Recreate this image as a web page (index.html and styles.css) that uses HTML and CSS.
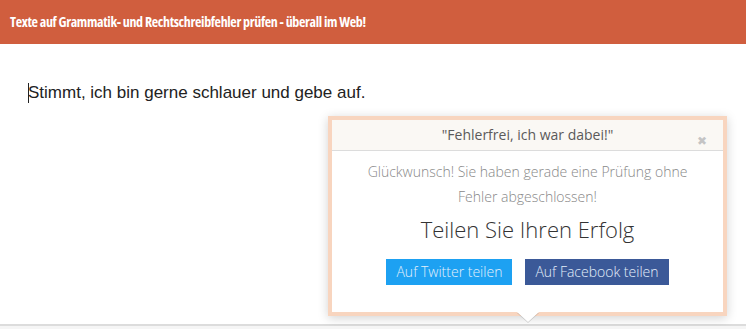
FILE: index.html
```html
<!DOCTYPE html>
<html lang="de">
<head>
    <meta charset="UTF-8">
    <title>Texte prüfen</title>
    <link rel="stylesheet" href="styles.css">
</head>
<body>
    <div class="topbar">Texte auf Grammatik- und Rechtschreibfehler prüfen - überall im Web!</div>

    <div class="editor">
        <p class="editor-text"><span class="caret"></span>Stimmt, ich bin gerne schlauer und gebe auf.</p>

        <div class="popup">
            <div class="popup-head">
                "Fehlerfrei, ich war dabei!"
                <span class="popup-close">&#10006;</span>
            </div>
            <div class="popup-body">
                <p class="popup-msg">Glückwunsch! Sie haben gerade eine Prüfung ohne<br>Fehler abgeschlossen!</p>
                <h2 class="popup-title">Teilen Sie Ihren Erfolg</h2>
                <div class="share">
                    <a class="btn btn-twitter">Auf Twitter teilen</a>
                    <a class="btn btn-facebook">Auf Facebook teilen</a>
                </div>
            </div>
            <div class="popup-arrow"></div>
        </div>
    </div>
</body>
</html>
```

FILE: styles.css
```css
body {
    margin: 0;
    font-family: "Open Sans", sans-serif;
    background: #f5f5f5;
}
.topbar {
    background: #d05e3e;
    color: #fff;
    height: 44px;
    line-height: 44px;
    padding: 0 10px;
    font-size: 14px;
    font-weight: 700;
    font-stretch: condensed;
    letter-spacing: -0.35px;
}
.editor {
    position: relative;
    background: #fff;
    height: 280px;
    border-bottom: 2px solid #dcdcdc;
}
.editor-text {
    margin: 0;
    padding: 39px 0 0 28px;
    font-family: "Liberation Sans", Arial, sans-serif;
    font-size: 17px;
    line-height: 20px;
    color: #222;
}
.caret {
    display: inline-block;
    width: 1px;
    height: 20px;
    background: #222;
    vertical-align: top;
    margin-right: -1px;
}
.popup {
    position: absolute;
    left: 328px;
    top: 72px;
    width: 391px;
    height: 192px;
    border: 4px solid #f8d5bf;
    background: #fff;
    box-shadow: 0 2px 10px rgba(0, 0, 0, 0.18);
}
.popup-head {
    position: relative;
    background: #faf8f4;
    border-bottom: 1px solid #dcdcdc;
    height: 30px;
    line-height: 30px;
    text-align: center;
    font-size: 14px;
    color: #5a5a5a;
}
.popup-close {
    position: absolute;
    right: 16px;
    top: 6px;
    font-size: 12px;
    color: #c4c4c4;
}
.popup-body {
    text-align: center;
    padding-top: 8px;
}
.popup-msg {
    margin: 0;
    font-size: 14px;
    font-weight: 300;
    line-height: 25px;
    color: #888;
}
.popup-title {
    margin: 5px 0 0;
    font-size: 22px;
    font-weight: 300;
    line-height: 30px;
    color: #333;
}
.share {
    display: flex;
    justify-content: center;
    gap: 13px;
    margin-top: 15px;
}
.btn {
    display: block;
    height: 26px;
    line-height: 26px;
    padding: 0 10px;
    font-size: 14px;
    font-weight: 300;
    color: #e4f0fb;
}
.btn-twitter { background: #1da1f2; }
.btn-facebook { background: #3b5998; }
.popup-arrow {
    position: absolute;
    left: 185px;
    bottom: -10px;
    width: 0;
    height: 0;
    border-left: 11px solid transparent;
    border-right: 11px solid transparent;
    border-top: 10px solid #fff;
    filter: drop-shadow(0 1px 0 rgba(0, 0, 0, 0.15));
}
```
